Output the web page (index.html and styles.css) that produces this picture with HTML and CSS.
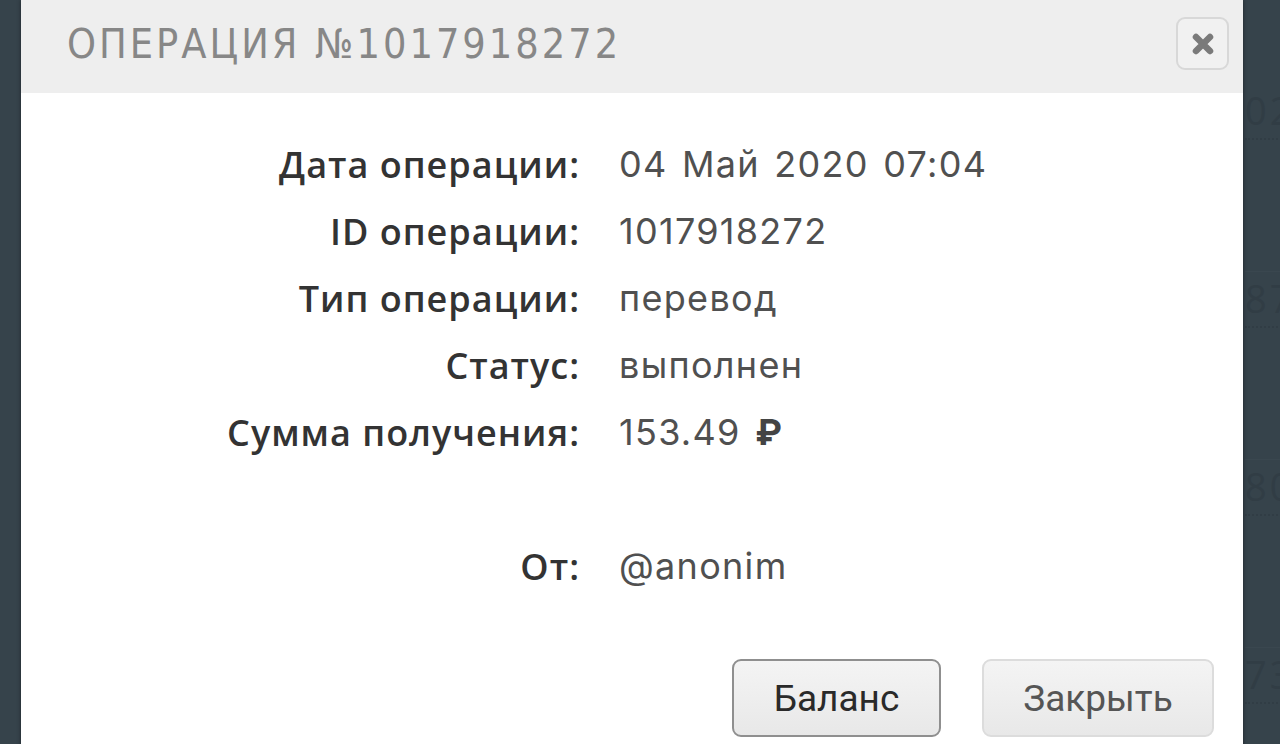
FILE: index.html
```html
<!DOCTYPE html>
<html lang="ru">
<head>
  <meta charset="UTF-8" />
  <meta name="viewport" content="width=device-width, initial-scale=1.0" />
  <title>Операция №1017918272</title>
  <link rel="stylesheet" href="styles.css">
</head>
<body>
  <!-- page behind the dialog -->
  <div id="page">
    <div class="page-row"><span class="page-num">02</span></div>
    <div class="page-row"><span class="page-num">87</span></div>
    <div class="page-row"><span class="page-num">80</span></div>
    <div class="page-row"><span class="page-num">73</span></div>
  </div>

  <div id="modal">
    <div class="modal-head">
      <div class="modal-title">Операция №1017918272</div>
      <button class="modal-close" type="button" aria-label="Закрыть">
        <svg width="26" height="26" viewBox="0 0 26 26">
          <path d="M6 6 L20 20 M20 6 L6 20" stroke="#7a7a7a" stroke-width="6.5" stroke-linecap="round"/>
        </svg>
      </button>
    </div>

    <div class="modal-body">
      <div class="info">
        <div class="info-label">Дата операции:</div>
        <div class="info-value">04 Май 2020 07:04</div>
        <div class="info-label">ID операции:</div>
        <div class="info-value">1017918272</div>
        <div class="info-label">Тип операции:</div>
        <div class="info-value">перевод</div>
        <div class="info-label">Статус:</div>
        <div class="info-value">выполнен</div>
        <div class="info-label">Сумма получения:</div>
        <div class="info-value">153.49 <span class="rub">₽</span></div>
        <div class="info-spacer"></div>
        <div class="info-label">От:</div>
        <div class="info-value">@anonim</div>
      </div>

      <div class="modal-buttons">
        <button class="btn btn-main" type="button">Баланс</button>
        <button class="btn" type="button">Закрыть</button>
      </div>
    </div>
  </div>
</body>
</html>
```

FILE: styles.css
```css
html, body {
  margin: 0;
  height: 100%;
}

body {
  position: relative;
  overflow: hidden;
  background: #36434b;
  font-family: "Open Sans", sans-serif;
}

/* page under the overlay */
#page {
  display: flex;
  flex-direction: column;
  padding-top: 84px;
  padding-left: 1245px;
}

.page-row {
  height: 187px;
  border-bottom: 1px solid #3a474f;
}

.page-num {
  display: inline-block;
  font-family: "Open Sans", sans-serif;
  font-size: 38px;
  letter-spacing: 3px;
  color: #313d45;
  padding-bottom: 2px;
  border-bottom: 2px dotted #313d45;
  white-space: nowrap;
}

/* dialog */
#modal {
  position: absolute;
  left: 21px;
  top: 0;
  width: 1222px;
  height: 800px;
  background: #fff;
  box-shadow: 0 0 4px rgba(0, 0, 0, 0.45);
}

.modal-head {
  display: flex;
  align-items: center;
  justify-content: space-between;
  height: 93px;
  padding: 0 14px 0 46px;
  background: #eeeeee;
}

.modal-title {
  font-family: "DejaVu Sans Condensed", "DejaVu Sans", sans-serif;
  font-stretch: condensed;
  font-size: 41px;
  letter-spacing: 3px;
  text-transform: uppercase;
  color: #878787;
  padding-bottom: 6px;
}

.modal-close {
  display: flex;
  align-items: center;
  justify-content: center;
  width: 53px;
  height: 53px;
  margin-top: -6px;
  padding: 0;
  background: #f1f1f1;
  border: 2px solid #d8d8d8;
  border-radius: 9px;
}

.modal-body {
  padding-top: 38px;
}

.info {
  display: grid;
  grid-template-columns: 559px 1fr;
  column-gap: 39px;
  grid-auto-rows: 67px;
  font-size: 36px;
  line-height: 67px;
}

.info-label {
  text-align: right;
  font-weight: 600;
  letter-spacing: 1px;
  color: #333;
}

.info-value {
  font-family: Inter, sans-serif;
  letter-spacing: 1.3px;
  word-spacing: 3px;
  color: #505050;
}

.info-spacer {
  grid-column: 1 / 3;
}

.rub {
  font-weight: 700;
  color: #444;
}

.modal-buttons {
  display: flex;
  justify-content: flex-end;
  gap: 41px;
  padding: 59px 29px 0 0;
}

.btn {
  height: 78px;
  width: 232px;
  font-family: Roboto, sans-serif;
  font-size: 37px;
  color: #555;
  background: linear-gradient(#f4f4f4, #e8e8e8);
  border: 2px solid #dcdcdc;
  border-radius: 9px;
}

.btn-main {
  width: 209px;
  color: #2a2a2a;
  border-color: #8f8f8f;
}
```
